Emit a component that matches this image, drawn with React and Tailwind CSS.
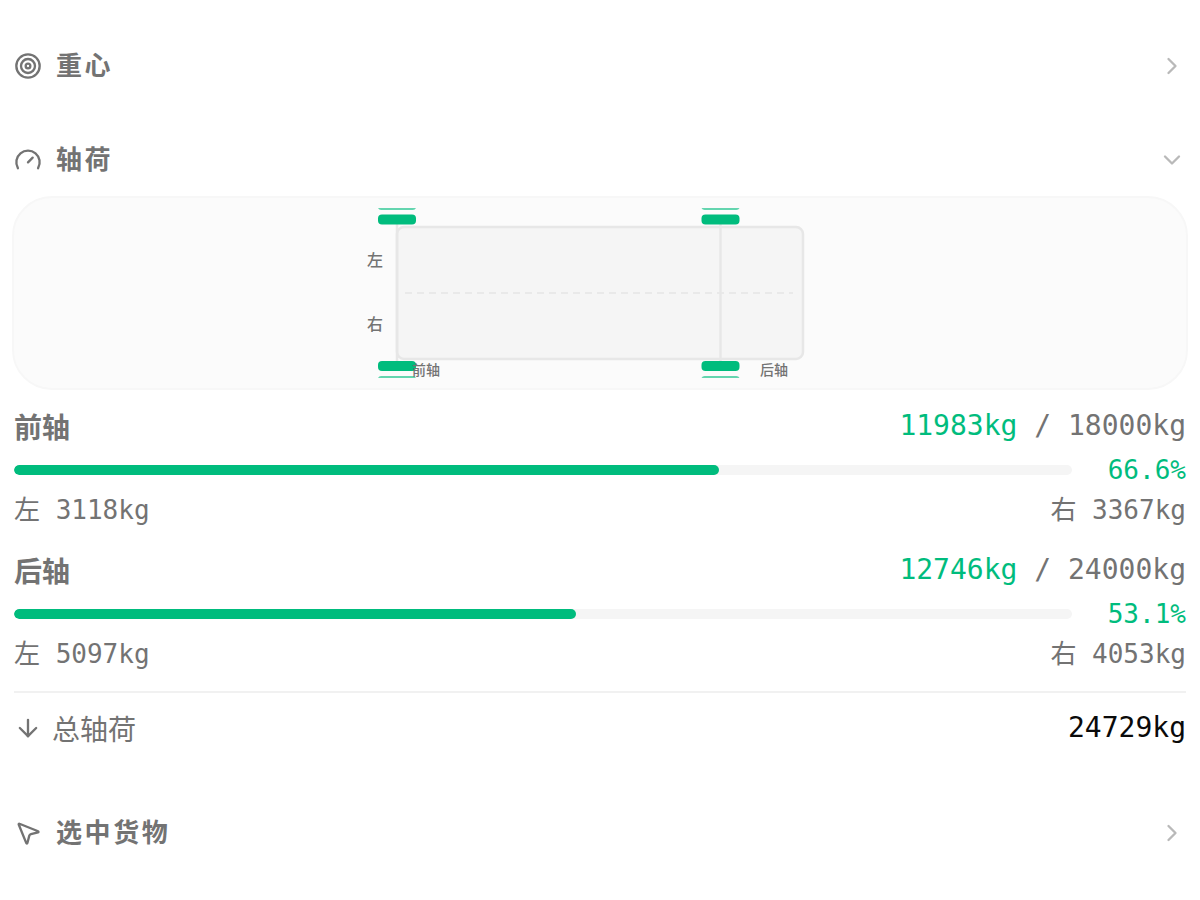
import React from 'react';
import { Target, ChevronRight, ChevronDown, ArrowDown, MousePointer2 } from 'lucide-react';

const MONO = "font-['DejaVu_Sans_Mono','Noto_Sans_CJK_SC',monospace]";

function GaugeIcon() {
  return (
    <svg viewBox="0 0 24 24" className="size-7" fill="none" stroke="currentColor" strokeWidth="2" strokeLinecap="round" strokeLinejoin="round" aria-hidden="true">
      <path d="m12 14 4-4" />
      <path d="M3.34 19a10 10 0 1 1 17.32 0" />
    </svg>
  );
}

function SectionHeader({ icon, title, open = false }) {
  const Chevron = open ? ChevronDown : ChevronRight;
  return (
    <h2>
      <button type="button" aria-expanded={open} className="flex w-full items-center gap-3.5 py-3.5 text-left">
        {icon}
        <span className="grow pb-1 text-[26px] leading-[34px] font-bold tracking-widest">{title}</span>
        <Chevron className="size-7 text-[#b9b9b9]" />
      </button>
    </h2>
  );
}

function Wheels({ x }) {
  return (
    <g className="fill-emerald-500">
      <rect x={x} y="6.500" width="38" height="10" rx="4" />
      <rect x={x} y="153" width="38" height="10" rx="4" />
      <path opacity="0.6" d={`M${x} 0h38q-1 2-3 2h-32q-2 0-3-2z`} />
      <path opacity="0.6" d={`M${x} 170h38q-1-2-3-2h-32q-2 0-3 2z`} />
    </g>
  );
}

function AxleDiagram() {
  return (
    <div className="-mx-0.5 mt-[3px] flex justify-center rounded-[40px] border-2 border-[#f7f7f7] bg-[#fbfbfb] p-2.5">
      <svg viewBox="0 0 480 170" className="h-[170px] w-[480px] overflow-visible" role="img" aria-label="轴荷">
        <rect x="37" y="19" width="406" height="132" rx="7" className="fill-neutral-100" stroke="#e7e7e7" strokeWidth="2.500" />
        <path d="M45 85H433" stroke="#e9e9e9" strokeWidth="2" strokeDasharray="7 5" />
        <path d="M37 16V154M360.500 16V154" stroke="#e7e7e7" strokeWidth="2.500" />
        <Wheels x={18} />
        <Wheels x={341.5} />
        <g className="fill-neutral-500 font-['Noto_Sans_CJK_SC',sans-serif]" fontWeight="500" textAnchor="middle">
          <text x="15" y="58" fontSize="16">左</text>
          <text x="15" y="122" fontSize="16">右</text>
          <text x="66" y="167" fontSize="14">前轴</text>
          <text x="414" y="167" fontSize="14">后轴</text>
        </g>
      </svg>
    </div>
  );
}

function AxleLoad({ name, load, limit, percent, left, right }) {
  return (
    <div>
      <div className="flex items-center justify-between text-[28px] leading-[42px]">
        <span className="font-bold">{name}</span>
        <span className={MONO}>
          <span className="text-emerald-500">{load}kg</span> / {limit}kg
        </span>
      </div>
      <div className="mt-1 flex items-center gap-3.5">
        <div className="h-2.5 grow overflow-hidden rounded-full bg-neutral-100">
          <div className="h-full rounded-full bg-emerald-500" style={{ width: `${percent}%` }} />
        </div>
        <span className={`w-[100px] text-right text-[26px] leading-[38px] text-emerald-500 ${MONO}`}>{percent}%</span>
      </div>
      <div className={`mt-[3px] flex justify-between text-[26px] leading-9 ${MONO}`}>
        <span>左 {left}kg</span>
        <span>右 {right}kg</span>
      </div>
    </div>
  );
}

export default function App() {
  return (
    <main className="flex min-h-screen flex-col gap-7 bg-white px-3.5 pt-[33px] pb-6 font-['Noto_Sans_CJK_SC',sans-serif] text-neutral-500">
      <section>
        <SectionHeader icon={<Target className="size-7" />} title="重心" />
      </section>
      <section>
        <SectionHeader icon={<GaugeIcon />} title="轴荷" open />
        <AxleDiagram />
        <div className="mt-[15px] flex flex-col gap-[21px]">
          <AxleLoad name="前轴" load={11983} limit={18000} percent={66.6} left={3118} right={3367} />
          <AxleLoad name="后轴" load={12746} limit={24000} percent={53.1} left={5097} right={4053} />
        </div>
        <div className="mt-[19px] flex items-center justify-between border-t-2 border-[#f1f1f1] pt-3.5 pb-[23px] text-[28px] leading-[42px]">
          <span className="flex items-center gap-2.5">
            <ArrowDown className="size-7" />
            总轴荷
          </span>
          <span className={`text-neutral-950 ${MONO}`}>24729kg</span>
        </div>
      </section>
      <section>
        <SectionHeader icon={<MousePointer2 className="size-7" />} title="选中货物" />
      </section>
    </main>
  );
}
